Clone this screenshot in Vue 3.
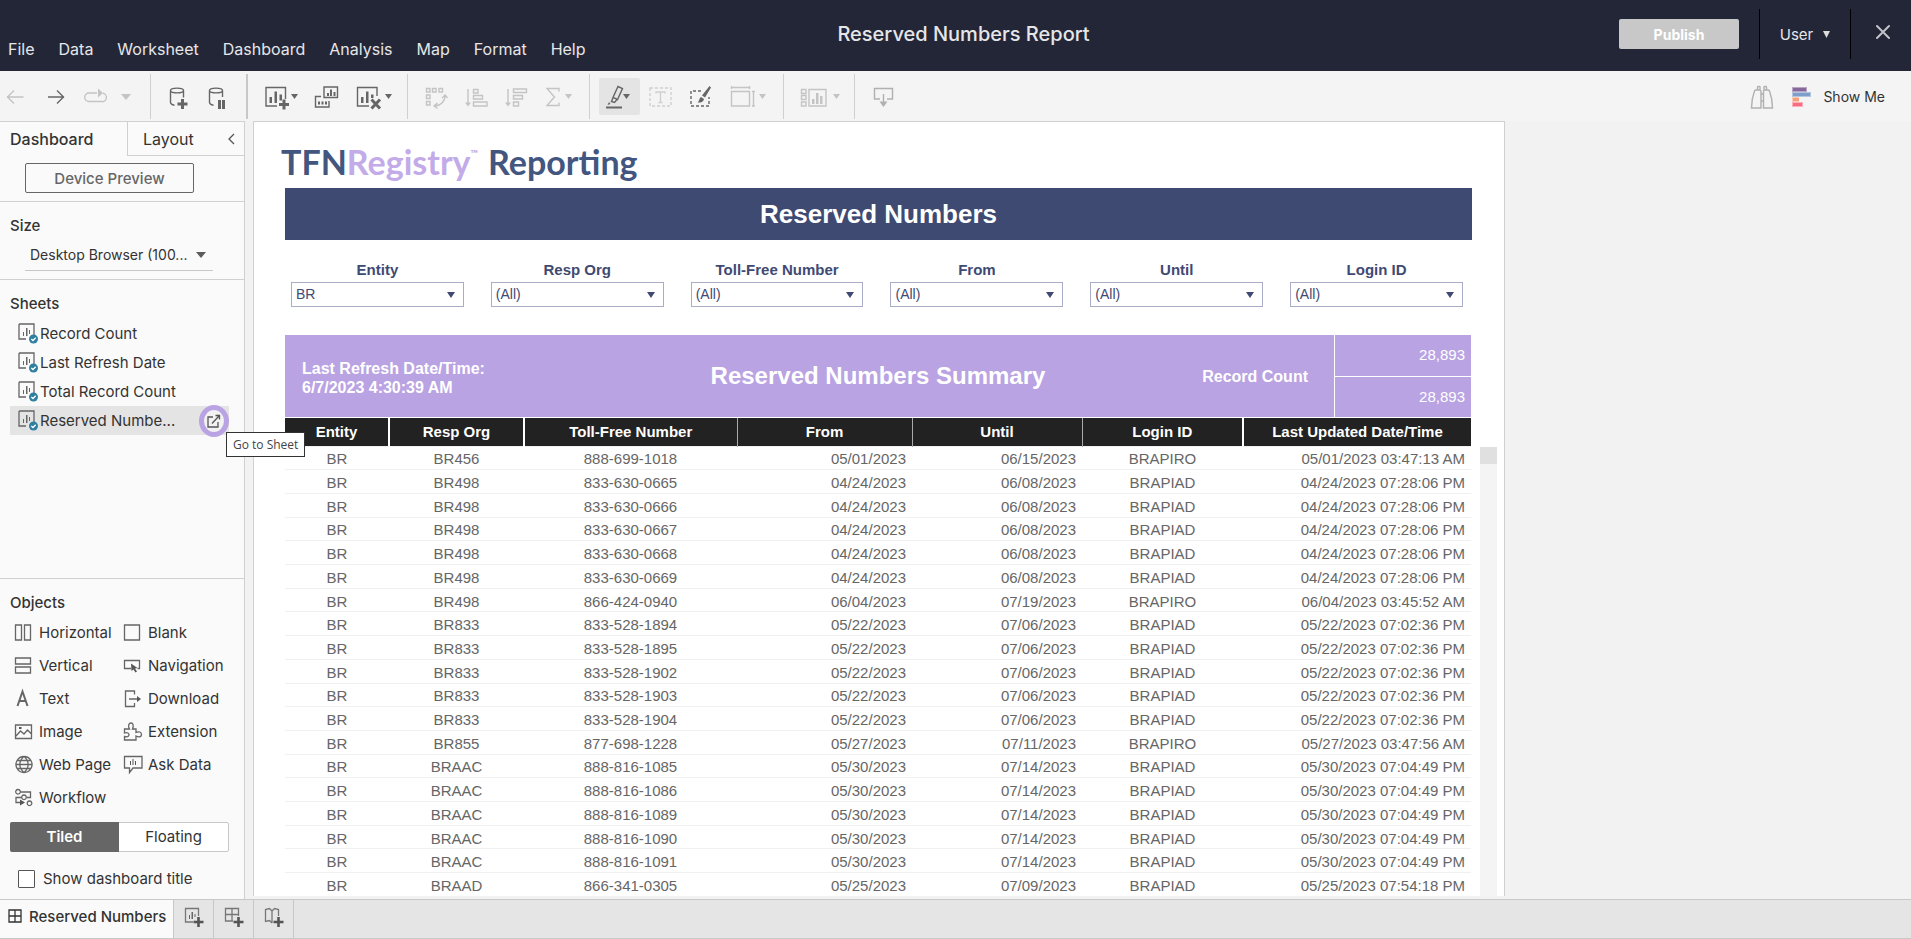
<script setup>
import { ref } from 'vue'

const menus = ['File', 'Data', 'Worksheet', 'Dashboard', 'Analysis', 'Map', 'Format', 'Help']

// Toolbar glyphs: s = thin stroke, t = thick stroke, f = fill; drawn in a 24px high box
const cyl = 'M4.5 5.5C4.5 2.3 17.5 2.3 17.5 5.5S4.5 8.7 4.5 5.5V17.5Q4.8 19.6 8.5 20.3M17.5 5.5V'
const groups = [
  [
    { label: 'Undo', w: 24, off: true, s: 'M20.5 12H4M11 5.5L4.5 12L11 18.5' },
    { label: 'Redo', w: 24, s: 'M5 12H21M14 5.5L20.5 12L14 18.5' },
    { label: 'Replay', w: 25, off: true, caret: 'big', s: 'M14 8H6A4 4 0 0 0 6 16.5H18.5A4 4 0 0 0 20 8.3', f: 'M15 3.5L20 8L15 12.5Z' }
  ],
  [
    { label: 'New data source', w: 24, s: cyl + '12.5', t: 'M11.5 19h10M16.5 14v10' },
    { label: 'Pause updates', w: 24, s: cyl + '12', t: 'M14.5 15v9M18.5 15v9' }
  ],
  [
    { label: 'New worksheet', w: 24, caret: 'small', s: 'M13 21H2V2.5H21.5V14', f: 'M5.5 12h2.5v6h-2.5zM10.5 6.5h2.5v11.5h-2.5zM15.5 9.5h2.5v6h-2.5z', t: 'M15 19.5h10M20 14.5v10' },
    { label: 'Duplicate', w: 24, s: 'M7 11.5H1.5V22H15V16M10 2H23.5V12.5H10Z', f: 'M13 8h2v3h-2zM16 4.5h2v6.5h-2zM19.5 7h2v4h-2zM4 16.5h2v3h-2zM7.5 16.5h2v3h-2zM11 16.5h2v3h-2z' },
    { label: 'Clear sheet', w: 28, caret: 'small', s: 'M15 21H3.5V2.5H23V11', f: 'M7 12h2.5v6h-2.5zM12 6.5h2.5v11.5h-2.5zM17 9.5h2.5v3.5h-2.5z', t: 'M17.5 14.5l8.5 9M26 14.5l-8.5 9' }
  ],
  [
    { label: 'Swap rows and columns', w: 24, off: true, s: 'M2.5 3.5h3.5v3.5h-3.5zM8.5 3.5h3.5v3.5h-3.5zM15 3.5h3.5v3.5h-3.5zM2.5 10h3.5v3.5h-3.5zM2.5 16.5h3.5v3.5h-3.5zM21 11C21 16 17 20.5 11 21M18 13L21 10L23.5 13M13.5 18L10 21L13.5 23.5' },
    { label: 'Sort ascending', w: 24, off: true, s: 'M4 4V19M9.5 4.5h4.5v3.5h-4.5zM9.5 10.5h9v3.5h-9zM9.5 17h13.5v4h-13.5z', f: 'M1 17.5h6L4 21.5z' },
    { label: 'Sort descending', w: 24, off: true, s: 'M4 4V19M9.5 4h13v3.5h-13zM9.5 10.5h9v3.5h-9zM9.5 17h5v4h-5z', f: 'M1 17.5h6L4 21.5z' },
    { label: 'Totals', w: 18, off: true, caret: 'small', s: 'M15 6.5V3.5H3L10.5 12L3 20.5H15V17.5' }
  ],
  [
    { label: 'Highlight', w: 18, caret: 'small', active: true, s: 'M13 1.5L17.5 3.5L12.5 14.5L8 12.5ZM8 12.5L6.5 16.5L9.5 17.5L12 14.5', f: 'M4 17l1.500 2-3 1zM1 21.500H17V23.500H1z' },
    { label: 'Text labels', w: 24, off: true, faint: true, s: 'M8 8.5V7H17V8.5M12.5 7V17.5M10.5 17.5H14.5', dash: 'M2 3H23V21H2Z' },
    { label: 'Format', w: 24, dash: 'M13 6H3V21H21V12', f: 'M21.5 1L23 2.5L17 12.5L14 10.5ZM13 12L16 14C15.5 17 12.5 18 9.5 17.5C11.5 16.5 11 13 13 12Z' },
    { label: 'Fit', w: 28, off: true, caret: 'small', s: 'M3.5 6.5H21.5V21H3.5ZM3.5 2.5H21.5M3.5 1V4M21.5 1V4M25.5 6.5V21M24 6.5H27M24 21H27' }
  ],
  [
    { label: 'Show or hide cards', w: 30, off: true, caret: 'small', s: 'M1.5 4.5h4.5v4h-4.5zM1.5 10.5h4.5v4h-4.5zM1.5 17h4.5v4h-4.5zM9 4.5H26V21H9Z', f: 'M12 14h2.5v5h-2.5zM16 8h2.5v11h-2.5zM20 11h2.5v8h-2.5z' }
  ],
  [
    { label: 'Download', w: 24, mid: true, s: 'M9 14H3.5V3.5H21.5V14H16M12.5 9V19', f: 'M8.5 16.5h8L12.5 22z' }
  ]
]

const sheets = ['Record Count', 'Last Refresh Date', 'Total Record Count', 'Reserved Numbe...']

const objects = [
  { n: 'Horizontal', s: 'M1.5 2h6v15h-6zM10.5 2h6v15h-6z' },
  { n: 'Blank', s: 'M1.5 2h15v15h-15z' },
  { n: 'Vertical', s: 'M1.5 2h15v6h-15zM1.5 11h15v6h-15z' },
  { n: 'Navigation', s: 'M8 12.5H1.5V4.5H16.5V12.5H14.5', f: 'M8 7.5L14.5 12L12 12.5L14 15.5L12.5 16.5L10.5 13.5L8.5 15Z' },
  { n: 'Text', b: 'M3.5 17L8.5 2.5L13.5 17M5.5 12H12' },
  { n: 'Download', s: 'M11.5 5.5V2H2.5V17.5H11.5V14M6 10H15', f: 'M14 7L18 10L14 13Z' },
  { n: 'Image', s: 'M1.5 3h16v13.5h-16zM2 14L6.5 9L10 12L13.5 8L17.5 12', f: 'M5 5h2.5v2h-2.5z' },
  { n: 'Extension', s: 'M1.5 7H6.5C4.500 3.5 6 1 8 1S11 3.5 9.5 7H13V10.5C16 9 18.5 10 18.5 12.5S16 15.5 13 14V18H1.5V14.5C5.500 15.5 6 13.5 6 12.5S4.500 10 1.5 11Z' },
  { n: 'Web Page', s: 'M10 1.5a8 8 0 1 0 .01 0M10 1.5C4.500 6 4.500 13 10 17.5C15.5 13 15.5 6 10 1.5M2 9.5H18M3 5.5H17M3 13.5H17' },
  { n: 'Ask Data', s: 'M1.5 1.5H19V13H10L6.5 17.5V13H1.5Z', f: 'M7 6h1v4h-1zM9.5 4h1v6h-1zM12 6h1v4h-1z' },
  { n: 'Workflow', s: 'M4 1.5a2.3 2.3 0 1 0 .01 0M6.5 4H16.5V9.5H13M8 9.5H2V14.5H6M10 7a2.3 2.3 0 1 0 .01 0M15.5 13a2.3 2.3 0 1 0 .01 0', f: 'M6 11.5L11 14.5L6 17.5Z' }
]

const filters = ['Entity', 'Resp Org', 'Toll-Free Number', 'From', 'Until', 'Login ID']

const cols = ['Entity', 'Resp Org', 'Toll-Free Number', 'From', 'Until', 'Login ID', 'Last Updated Date/Time']
const rows = [
  ['BR', 'BR456', '888-699-1018', '05/01/2023', '06/15/2023', 'BRAPIRO', '05/01/2023 03:47:13 AM'],
  ['BR', 'BR498', '833-630-0665', '04/24/2023', '06/08/2023', 'BRAPIAD', '04/24/2023 07:28:06 PM'],
  ['BR', 'BR498', '833-630-0666', '04/24/2023', '06/08/2023', 'BRAPIAD', '04/24/2023 07:28:06 PM'],
  ['BR', 'BR498', '833-630-0667', '04/24/2023', '06/08/2023', 'BRAPIAD', '04/24/2023 07:28:06 PM'],
  ['BR', 'BR498', '833-630-0668', '04/24/2023', '06/08/2023', 'BRAPIAD', '04/24/2023 07:28:06 PM'],
  ['BR', 'BR498', '833-630-0669', '04/24/2023', '06/08/2023', 'BRAPIAD', '04/24/2023 07:28:06 PM'],
  ['BR', 'BR498', '866-424-0940', '06/04/2023', '07/19/2023', 'BRAPIRO', '06/04/2023 03:45:52 AM'],
  ['BR', 'BR833', '833-528-1894', '05/22/2023', '07/06/2023', 'BRAPIAD', '05/22/2023 07:02:36 PM'],
  ['BR', 'BR833', '833-528-1895', '05/22/2023', '07/06/2023', 'BRAPIAD', '05/22/2023 07:02:36 PM'],
  ['BR', 'BR833', '833-528-1902', '05/22/2023', '07/06/2023', 'BRAPIAD', '05/22/2023 07:02:36 PM'],
  ['BR', 'BR833', '833-528-1903', '05/22/2023', '07/06/2023', 'BRAPIAD', '05/22/2023 07:02:36 PM'],
  ['BR', 'BR833', '833-528-1904', '05/22/2023', '07/06/2023', 'BRAPIAD', '05/22/2023 07:02:36 PM'],
  ['BR', 'BR855', '877-698-1228', '05/27/2023', '07/11/2023', 'BRAPIRO', '05/27/2023 03:47:56 AM'],
  ['BR', 'BRAAC', '888-816-1085', '05/30/2023', '07/14/2023', 'BRAPIAD', '05/30/2023 07:04:49 PM'],
  ['BR', 'BRAAC', '888-816-1086', '05/30/2023', '07/14/2023', 'BRAPIAD', '05/30/2023 07:04:49 PM'],
  ['BR', 'BRAAC', '888-816-1089', '05/30/2023', '07/14/2023', 'BRAPIAD', '05/30/2023 07:04:49 PM'],
  ['BR', 'BRAAC', '888-816-1090', '05/30/2023', '07/14/2023', 'BRAPIAD', '05/30/2023 07:04:49 PM'],
  ['BR', 'BRAAC', '888-816-1091', '05/30/2023', '07/14/2023', 'BRAPIAD', '05/30/2023 07:04:49 PM'],
  ['BR', 'BRAAD', '866-341-0305', '05/25/2023', '07/09/2023', 'BRAPIAD', '05/25/2023 07:54:18 PM']
]

const showTitle = ref(false)
</script>

<template>
  <div class="app">
    <header class="top">
      <nav class="menu">
        <button v-for="m in menus" :key="m" type="button">{{ m }}</button>
      </nav>
      <h1>Reserved Numbers Report</h1>
      <div class="account">
        <button type="button" class="publish">Publish</button>
        <button type="button" class="user">
          User
          <svg width="7" height="7" viewBox="0 0 7 7"><path d="M0 0H7L3.5 7Z" fill="#dcdcdc" /></svg>
        </button>
        <button type="button" class="close" aria-label="Close">
          <svg width="14" height="14" viewBox="0 0 14 14"><path d="M1 1L13 13M13 1L1 13" stroke="#c4c4c8" stroke-width="2" stroke-linecap="round" /></svg>
        </button>
      </div>
    </header>

    <div class="toolbar">
      <div v-for="(g, gi) in groups" :key="gi" class="group">
        <button
          v-for="i in g"
          :key="i.label"
          type="button"
          :aria-label="i.label"
          :class="{ off: i.off, mid: i.mid, active: i.active, faint: i.faint }"
        >
          <svg class="glyph" :width="i.w" height="24" :viewBox="`0 0 ${i.w} 24`">
            <path v-if="i.s" :d="i.s" class="s" />
            <path v-if="i.dash" :d="i.dash" class="s dash" />
            <path v-if="i.f" :d="i.f" class="f" />
            <path v-if="i.t" :d="i.t" class="t" />
          </svg>
          <svg v-if="i.caret === 'small'" width="7" height="5" viewBox="0 0 7 5"><path class="f" d="M0 0H7L3.5 5Z" /></svg>
          <svg v-if="i.caret === 'big'" class="replay-caret" width="10" height="6" viewBox="0 0 10 6"><path class="f" d="M0 0H10L5 6Z" /></svg>
        </button>
      </div>
      <div class="show">
        <button type="button" aria-label="Find" class="mid">
          <svg class="glyph" width="24" height="24" viewBox="0 0 24 24">
            <path class="s" d="M1.5 23C1.5 15 3 10 4.5 6Q5 5 6 5H9.5Q11 5 11 7V23ZM7.5 5V2Q7.5 1.5 8 1.5H9.5Q10 1.5 10 2V5M22.5 23C22.5 15 21 10 19.5 6Q19 5 18 5H14.5Q13.5 5 13.5 7V23ZM16.5 5V2Q16.5 1.5 16 1.5H14.5Q14 1.5 14 2V5M11 9H13.5M11 16H13.5" />
          </svg>
        </button>
        <button type="button" class="showme">
          <svg width="20" height="20" viewBox="0 0 20 20">
            <path d="M0 0H15V5H0Z" fill="#b9a6c4" /><path d="M1 1H14V4H1Z" fill="#87689a" />
            <path d="M0 5H19V10H0Z" fill="#b3c6e0" /><path d="M1 6H18V9H1Z" fill="#7d9fca" />
            <path d="M0 10H7V15H0Z" fill="#f9cdb8" /><path d="M1 11H7V14H1Z" fill="#f5a07d" />
            <path d="M0 15H11V20H0Z" fill="#fbb0bb" /><path d="M1 16H10V19H1Z" fill="#f96b80" />
          </svg>
          Show Me
        </button>
      </div>
    </div>

    <div class="body">
      <aside>
        <div class="tabs">
          <button type="button" class="on">Dashboard</button>
          <button type="button" class="layout">
            Layout
            <svg width="7" height="12" viewBox="0 0 7 12"><path d="M6 1L1 6L6 11" fill="none" stroke="#555" stroke-width="1.3" /></svg>
          </button>
        </div>
        <div class="preview"><button type="button">Device Preview</button></div>
        <section class="size">
          <h2><label for="size">Size</label></h2>
          <div class="picker">
            <select id="size"><option>Desktop Browser (100...</option></select>
            <svg width="10" height="6" viewBox="0 0 10 6"><path d="M0 0H10L5 6Z" fill="#5c5c5c" /></svg>
          </div>
        </section>
        <section class="sheets">
          <h2>Sheets</h2>
          <ul>
            <li v-for="(s, i) in sheets" :key="s" :class="{ sel: i === 3 }">
              <svg width="20" height="21" viewBox="0 0 20 21">
                <path d="M1 1H16V12M8 16H1V1" fill="none" stroke="#666" stroke-width="1.3" />
                <path d="M5 9h1v4h-1zM8 5h1.5v8h-1.5zM11 7h1v4h-1z" fill="#666" />
                <circle cx="15.5" cy="16" r="4.5" fill="#2f7f9f" />
                <path d="M13.3 16L15 17.5L17.7 14.7" fill="none" stroke="#fff" stroke-width="1.3" />
              </svg>
              <span>{{ s }}</span>
              <button v-if="i === 3" type="button" class="goto" aria-label="Go to Sheet">
                <svg width="14" height="14" viewBox="0 0 14 14">
                  <path d="M6 3H1V13H11V8M5 9.5L12 2M8.5 1.5H12.5V5.5" fill="none" stroke="#555" stroke-width="1.3" />
                </svg>
              </button>
              <div v-if="i === 3" class="tip" role="tooltip">Go to Sheet</div>
            </li>
          </ul>
        </section>
        <section class="objects">
          <h2>Objects</h2>
          <div class="palette">
            <button v-for="o in objects" :key="o.n" type="button">
              <svg width="20" height="19" viewBox="0 0 20 19">
                <path v-if="o.s" :d="o.s" fill="none" stroke="#666" stroke-width="1.3" />
                <path v-if="o.b" :d="o.b" fill="none" stroke="#666" stroke-width="2" />
                <path v-if="o.f" :d="o.f" fill="#555" />
              </svg>
              {{ o.n }}
            </button>
          </div>
          <div class="mode">
            <button type="button" class="tiled">Tiled</button>
            <button type="button">Floating</button>
          </div>
          <label class="check"><input v-model="showTitle" type="checkbox" />Show dashboard title</label>
        </section>
      </aside>

      <main>
        <div class="logo">
          <span class="navy">TFN</span><span class="lilac">Registry<sup>™</sup></span><span class="navy word">Reporting</span>
        </div>
        <h2 class="banner">Reserved Numbers</h2>
        <div class="filters">
          <div v-for="(f, i) in filters" :key="f" class="filter">
            <label :for="'f' + i">{{ f }}</label>
            <div class="drop">
              <select :id="'f' + i"><option>{{ i === 0 ? 'BR' : '(All)' }}</option></select>
              <svg width="8" height="6" viewBox="0 0 8 6"><path d="M0 0H8L4 6Z" fill="#3f4a73" /></svg>
            </div>
          </div>
        </div>
        <div class="summary">
          <p class="refresh">Last Refresh Date/Time:<br />6/7/2023 4:30:39 AM</p>
          <h3>Reserved Numbers Summary</h3>
          <div class="count">
            <span>Record Count</span>
            <div class="figures"><div>28,893</div><div>28,893</div></div>
          </div>
        </div>
        <div class="grid">
          <table>
            <colgroup><col v-for="(c, i) in cols" :key="c" :class="'c' + i" /></colgroup>
            <thead><tr><th v-for="c in cols" :key="c" scope="col">{{ c }}</th></tr></thead>
            <tbody>
              <tr v-for="r in rows" :key="r[2]">
                <td v-for="(v, i) in r" :key="i" :class="{ num: i === 3 || i === 4 || i === 6 }">{{ v }}</td>
              </tr>
            </tbody>
          </table>
          <div class="track"><div class="thumb"></div></div>
        </div>
      </main>
    </div>

    <footer>
      <button type="button" class="current">
        <svg width="14" height="14" viewBox="0 0 14 14"><path d="M1 1H13V13H1ZM1 7H13M7 1V13" fill="none" stroke="#333" stroke-width="1.3" /></svg>
        Reserved Numbers
      </button>
      <button type="button" aria-label="New worksheet">
        <svg width="20" height="20" viewBox="0 0 20 20">
          <path d="M9 15H1.5V1.5H14.5V9" class="o" /><path d="M5 8h1v4h-1zM7.5 5h1.5v7h-1.5zM10.5 7h1v3h-1z" fill="#666" />
          <path d="M9.5 15H19.5M14.5 10V20" class="p" />
        </svg>
      </button>
      <button type="button" aria-label="New dashboard">
        <svg width="20" height="20" viewBox="0 0 20 20">
          <path d="M9 14H1.5V1.5H14.5V9M1.5 7.5H14.5M8 1.5V14" class="o" /><path d="M9.5 15H19.5M14.5 10V20" class="p" />
        </svg>
      </button>
      <button type="button" aria-label="New story">
        <svg width="20" height="20" viewBox="0 0 20 20">
          <path d="M8 16L5.500 13.500L1.5 14.5V2.500L5.500 1.500L8 4L10.500 1.500L14.500 2.500V9M8 4V16" class="o" /><path d="M9.5 15H19.5M14.5 10V20" class="p" />
        </svg>
      </button>
    </footer>
  </div>
</template>

<style>
body { background: #f2f2f2; }
</style>

<style scoped>
.app { display: flex; flex-direction: column; height: 100vh; font-family: Inter, "Open Sans", sans-serif; font-size: 15px; color: #333; background: #f2f2f2; overflow: hidden; }
.app * { box-sizing: border-box; }
button { font: inherit; color: inherit; background: none; border: 0; padding: 0; margin: 0; }
select { font: inherit; color: inherit; appearance: none; background: none; border: 0; padding: 0; width: 100%; height: 100%; }
h1, h2, h3, p, ul { margin: 0; padding: 0; font-weight: 500; }
h2 { font-size: 15px; line-height: 20px; }
svg { display: block; flex: none; overflow: visible; }

.top { display: grid; grid-template-columns: 1fr auto 1fr; height: 71px; flex: none; background: #232637; color: #e6e6e8; }
.menu { display: flex; align-items: center; gap: 24px; padding: 26px 0 0 8px; font-size: 16px; }
.top h1 { font-size: 20px; line-height: 24px; padding: 22px 0 0 16px; }
.account { display: flex; justify-content: flex-end; align-items: flex-start; padding-top: 9px; }
.publish { width: 120px; height: 30px; margin: 10px 20px 0 0; border-radius: 2px; background: #c8c8c8; color: #fff; font-weight: 700; font-size: 14px; }
.user { display: flex; align-items: center; justify-content: center; gap: 10px; width: 91px; height: 50px; border-left: 1px solid #000; }
.close { display: flex; align-items: center; justify-content: center; width: 61px; height: 50px; border-left: 1px solid #000; padding: 0 0 4px 4px; }

.toolbar { display: flex; flex: none; height: 50px; padding: 3px 0 2px; background: #f4f4f4; }
.group { display: flex; align-items: center; gap: 16px; padding: 0 17px 0 16px; border-right: 1px solid #d0d0d0; }
.group:first-child { padding: 0 19px 0 3px; }
.group:nth-child(2) { border-right: 2px solid #c8c8c8; gap: 15px; padding: 0 17px 0 15px; }
.group:nth-child(3) { padding-right: 15px; }
.group:nth-child(5) { padding-left: 9px; }
.group:nth-child(6) { padding-right: 14px; }
.group:nth-child(7) { border: 0; }
.toolbar button { display: flex; align-items: center; gap: 3px; color: #666; }
.toolbar button.off { color: #c4c4c4; }
.toolbar button.mid { color: #b0b0b0; }
.toolbar button.faint { color: #d0d0d0; }
.toolbar .active { background: #e4e4e4; border-radius: 2px; padding: 0 10px 0 6px; margin-right: -8px; height: 37px; gap: 0; }
.replay-caret { margin-left: 10px; }
.s { fill: none; stroke: currentColor; stroke-width: 1.4; }
.t { fill: none; stroke: currentColor; stroke-width: 3; }
.f { fill: currentColor; }
.dash { stroke-dasharray: 3 2; }
.show { display: flex; align-items: center; gap: 18px; margin-left: auto; padding-right: 26px; }
.toolbar .showme { gap: 11px; color: #333; font-size: 14px; }

.body { display: flex; flex: 1; min-height: 0; }
aside { display: flex; flex-direction: column; flex: none; width: 245px; background: #fafafa; border-top: 1px solid #d0d0d0; border-right: 1px solid #d0d0d0; }
.tabs { display: flex; height: 34px; flex: none; font-size: 16px; }
.tabs .on { width: 127px; text-align: left; padding-left: 10px; font-weight: 500; }
.layout { display: flex; align-items: center; justify-content: space-between; flex: 1; padding: 0 9px 0 15px; border-left: 1px solid #d0d0d0; border-bottom: 1px solid #d0d0d0; }
.preview { height: 46px; flex: none; padding: 7px 50px 0 25px; border-bottom: 1px solid #d0d0d0; }
.preview button { width: 100%; height: 30px; border: 1px solid #666; border-radius: 2px; font-weight: 500; color: #666; }
.size { height: 78px; flex: none; padding: 14px 31px 0 25px; border-bottom: 1px solid #d0d0d0; }
.size h2 { margin-left: -15px; }
.picker { display: flex; align-items: center; height: 32px; margin-top: 3px; padding: 0 7px 0 5px; border-bottom: 1px solid #c8c8c8; font-size: 14px; }
.sheets { flex: 1; padding: 14px 15px 0 10px; min-height: 0; }
.sheets h2 { margin-bottom: 5px; }
ul { list-style: none; }
li { position: relative; display: flex; align-items: center; gap: 2px; height: 29px; padding-left: 8px; font-weight: 400; }
.sel { background: #e4e4e4; }
.goto { display: flex; align-items: center; justify-content: center; width: 30px; height: 32px; margin-left: auto; border: 5px solid #b9a3e3; border-radius: 50%; background: #f2f2f2; }
.tip { position: absolute; z-index: 2; left: 216px; top: 26px; height: 25px; padding: 0 6px; border: 1px solid #333; background: #fff; font: 12px/23px "Open Sans", sans-serif; color: #444; white-space: nowrap; }
.objects { flex: none; padding: 14px 15px 11px 10px; border-top: 1px solid #d0d0d0; }
.palette { display: grid; grid-template-columns: 109px 1fr; margin-top: 3px; }
.palette button { display: flex; align-items: center; gap: 5px; height: 33px; padding-left: 4px; white-space: nowrap; }
.mode { display: flex; height: 30px; margin-top: 8px; border: 1px solid #c8c8c8; border-radius: 2px; background: #fff; }
.mode button { flex: 1; padding-bottom: 2px; }
.mode .tiled { background: #666; color: #fff; font-weight: 600; margin: -1px 0 -1px -1px; border-radius: 2px 0 0 2px; }
.check { display: flex; align-items: center; gap: 8px; margin-top: 18px; padding-left: 8px; line-height: 18px; }
.check input { appearance: none; width: 17px; height: 18px; margin: 0; border: 1px solid #555; border-radius: 1px; background: #fff; }

main { display: flex; flex-direction: column; flex: 0 1 1252px; min-width: 0; margin: 0 0 3px 8px; padding: 0 7px 0 31px; background: #fff; border: 1px solid #d0d0d0; border-bottom: 0; font-family: "Liberation Sans", Arial, sans-serif; overflow: hidden; }
.logo { display: flex; align-items: baseline; flex: none; height: 66px; margin-left: -4px; padding-top: 18px; font: 700 34px/44px Lato, sans-serif; }
.navy { color: #42567f; }
.word { margin-left: 10px; }
.lilac { color: #c2abe8; }
.logo sup { font-size: 10px; line-height: 10px; vertical-align: 18px; }
.banner { flex: none; height: 52px; margin-right: 25px; background: #3f4a73; color: #fff; font-size: 26px; line-height: 52px; font-weight: 700; text-align: center; }
.filters { display: grid; flex: none; grid-template-columns: repeat(6, 1fr); gap: 27px; height: 95px; margin-right: 25px; padding: 20px 9px 0 6px; color: #3f4a73; }
.filter label { display: block; font-weight: 700; font-size: 15px; line-height: 20px; text-align: center; }
.drop { display: flex; align-items: center; height: 25px; margin-top: 2px; padding: 0 8px 0 4px; border: 1px solid #a9acc6; font-size: 14px; }
.drop select { padding-bottom: 2px; }
.summary { display: grid; flex: none; grid-template-columns: 1fr auto 1fr; align-items: center; height: 82px; margin-right: 26px; background: #b9a3e3; color: #fff; }
.refresh { padding-left: 17px; font-weight: 700; font-size: 16px; line-height: 19px; padding-top: 3px; }
.summary h3 { font-size: 24px; font-weight: 700; }
.count { display: flex; align-items: center; justify-content: flex-end; gap: 26px; font-size: 16px; font-weight: 700; height: 100%; }
.count span { padding-top: 2px; }
.figures { width: 137px; height: 100%; border-left: 1px solid #fff; font-size: 15px; font-weight: 400; }
.figures div { display: flex; align-items: center; justify-content: flex-end; height: 50%; padding: 0 6px 2px 0; }
.figures div + div { border-top: 1px solid #fff; }
.grid { display: flex; flex: 1; gap: 9px; min-height: 0; margin-top: 1px; }
table { flex: 1; table-layout: fixed; border-collapse: collapse; height: 100%; min-width: 0; font-size: 15px; color: #666; }
th { height: 28px; padding: 0; background: #222; color: #fff; font-weight: 700; border-left: 2px solid #fff; }
th:first-child { border-left: 0; }
th:nth-child(n + 4):nth-child(-n + 6) { border-left: 1px solid #aaa; }
td { padding: 3px 0 0; border-top: 1px solid #f0f0f0; line-height: 18px; text-align: center; }
td.num { text-align: right; padding-right: 6px; }
.c0 { width: 104px; } .c1 { width: 135px; } .c2 { width: 213px; } .c3 { width: 175px; } .c4 { width: 170px; } .c5 { width: 161px; } .c6 { width: 228px; }
.track { width: 17px; margin-top: 29px; background: #f4f4f4; }
.thumb { height: 17px; background: #e0e0e0; }

footer { display: flex; flex: none; height: 40px; background: #e5e5e5; border-top: 1px solid #c8c8c8; border-bottom: 1px solid #c8c8c8; }
footer button { display: flex; align-items: center; justify-content: center; width: 40px; padding-bottom: 4px; border-right: 1px solid #c8c8c8; }
footer .current { width: auto; gap: 7px; padding: 0 7px 6px 8px; background: #fafafa; font-weight: 500; }
.o { fill: none; stroke: #777; stroke-width: 1.3; }
.p { fill: none; stroke: #555; stroke-width: 2.6; }
</style>
